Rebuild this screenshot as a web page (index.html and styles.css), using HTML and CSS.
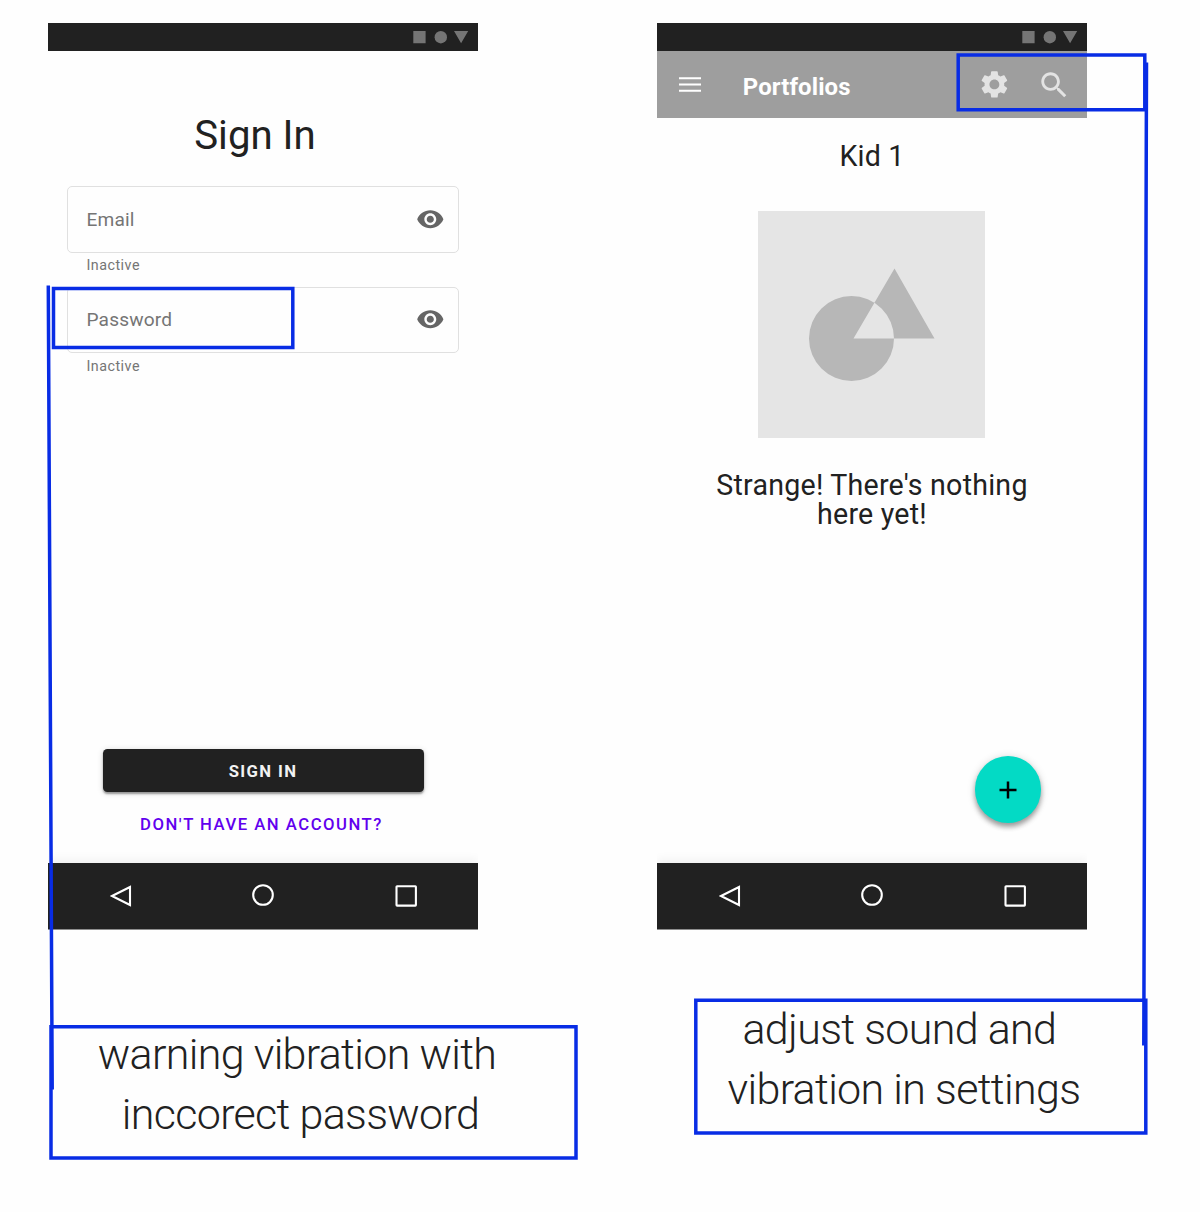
FILE: index.html
```html
<!DOCTYPE html>
<html lang="en">
<head>
<meta charset="utf-8">
<title>Sign in and portfolios wireframes</title>
<link rel="stylesheet" href="styles.css">
</head>
<body>
<svg class="defs" aria-hidden="true">
  <symbol id="status" viewBox="0 0 430 28.5">
    <path d="M365.300 8h12.300v12.300H365.300zM406 8h14.200l-7.100 12.200z"/>
    <circle cx="392.8" cy="14.200" r="6.200"/>
  </symbol>
  <symbol id="nav" viewBox="0 0 430 67">
    <path d="M64 33l18-9v18z"/>
    <circle cx="215" cy="32" r="9.8"/>
    <rect x="348.5" y="23.2" width="19.4" height="19.4" rx=".6"/>
  </symbol>
  <symbol id="eye" viewBox="0 0 24 24">
    <path d="M12 4.500C7 4.500 2.730 7.610 1 12c1.730 4.390 6 7.500 11 7.500s9.270-3.110 11-7.500c-1.730-4.390-6-7.500-11-7.500zM12 17c-2.760 0-5-2.240-5-5s2.240-5 5-5 5 2.240 5 5-2.240 5-5 5zm0-8c-1.660 0-3 1.340-3 3s1.340 3 3 3 3-1.340 3-3-1.340-3-3-3z"/>
  </symbol>
</svg>

<main class="board">
  <section class="column">
    <div class="phone">
      <svg class="status"><use href="#status"/></svg>
      <div class="screen sign-in">
        <h1 class="title">Sign In</h1>
        <div class="field"><span>Email</span><svg class="eye"><use href="#eye"/></svg></div>
        <p class="helper">Inactive</p>
        <div class="field"><span>Password</span><svg class="eye"><use href="#eye"/></svg></div>
        <p class="helper">Inactive</p>
        <div class="actions">
          <button class="primary">SIGN IN</button>
          <a class="link">DON'T HAVE AN ACCOUNT?</a>
        </div>
      </div>
      <svg class="nav"><use href="#nav"/></svg>
    </div>
    <div class="note note-left">
      <p class="note-one">warning vibration with</p>
      <p class="note-two">inccorect password</p>
    </div>
  </section>

  <section class="column">
    <div class="phone">
      <svg class="status"><use href="#status"/></svg>
      <header class="appbar">
        <svg class="menu" viewBox="0 0 22 15"><path d="M0 1.200h22M0 7.500h22M0 13.800h22"/></svg>
        <h2 class="appbar-title">Portfolios</h2>
        <svg class="gear" viewBox="0 0 24 24"><path d="M19.140 12.940c.040-.300.060-.610.060-.940 0-.320-.020-.640-.070-.940l2.030-1.580c.180-.140.230-.410.120-.610l-1.920-3.320c-.120-.220-.370-.290-.590-.220l-2.390.960c-.500-.380-1.030-.700-1.620-.940l-.360-2.540c-.040-.240-.240-.410-.480-.410h-3.840c-.240 0-.430.170-.470.410l-.360 2.540c-.590.240-1.130.570-1.620.940l-2.390-.960c-.220-.080-.470 0-.590.220L2.740 8.870c-.120.210-.080.470.120.610l2.030 1.580c-.050.300-.090.630-.090.940s.020.640.070.940l-2.030 1.580c-.180.140-.230.410-.120.610l1.920 3.320c.120.220.370.290.590.220l2.390-.960c.500.380 1.030.700 1.620.940l.360 2.540c.050.240.240.410.480.410h3.840c.240 0 .440-.170.470-.410l.360-2.540c.590-.240 1.130-.560 1.620-.940l2.390.960c.220.080.470 0 .590-.220l1.920-3.320c.120-.220.070-.470-.120-.610l-2.010-1.580zM12 15.600c-1.980 0-3.600-1.620-3.600-3.600s1.620-3.600 3.600-3.600 3.600 1.620 3.600 3.600-1.620 3.600-3.600 3.600z"/></svg>
        <svg class="search" viewBox="0 0 24 24"><path d="M15.500 14h-.790l-.280-.270C15.410 12.590 16 11.110 16 9.500 16 5.910 13.090 3 9.500 3S3 5.910 3 9.500 5.910 16 9.500 16c1.610 0 3.090-.590 4.230-1.570l.270.280v.790l5 4.990L20.490 19l-4.990-5zm-6 0C7.010 14 5 11.990 5 9.500S7.010 5 9.500 5 14 7.010 14 9.500 11.990 14 9.500 14z"/></svg>
      </header>
      <div class="screen portfolio">
        <h3 class="kid">Kid 1</h3>
        <svg class="placeholder" viewBox="0 0 227 227">
          <path fill-rule="evenodd" d="M51 127.500a42.500 42.500 0 1 0 85 0a42.500 42.500 0 1 0-85 0zM95.500 127.500h81L136.500 57.500z"/>
        </svg>
        <p class="empty">Strange! There's nothing<br>here yet!</p>
        <button class="fab" aria-label="Add"><svg viewBox="0 0 18 18"><path d="M9 .5v17M.5 9h17"/></svg></button>
      </div>
      <svg class="nav"><use href="#nav"/></svg>
    </div>
    <div class="note note-right">
      <p class="note-three">adjust sound and</p>
      <p class="note-four">vibration in settings</p>
    </div>
  </section>

  <svg class="markup" viewBox="0 0 1200 1212">
    <path d="M53.500 288.500H292.800V347.500H53.500zM48.300 285.500L52.200 1089.500M958.200 54.900H1144.800V109.800H958.200zM1146.500 62.500L1143.800 1045.500"/>
    <path d="M51 1026.700H576V1157.900H51zM695.800 1000.300H1145.800V1133H695.800z"/>
  </svg>
</main>
</body>
</html>
```
FILE: styles.css
```css
* { box-sizing: border-box; }

body {
  margin: 0;
  background: #fefefe;
  color: #212121;
  font-family: Roboto, sans-serif;
}

h1, h2, h3, p { margin: 0; font-weight: 400; white-space: nowrap; }
button { border: 0; padding: 0; font-family: inherit; }
svg { display: block; flex: none; }
.defs { position: absolute; width: 0; height: 0; }

.board {
  position: relative;
  display: flex;
  gap: 80px;
  width: 1200px;
  height: 1212px;
  padding: 22.5px 0 0 48px;
  overflow: hidden;
}

.column { width: 529px; }
.phone { display: flex; flex-direction: column; width: 430px; height: 907px; }
.status { width: 430px; height: 28.5px; background: #212121; fill: #757575; }
.nav {
  width: 430px;
  height: 67px;
  background: #212121;
  fill: none;
  stroke: #fff;
  stroke-width: 2.1;
  box-shadow: 0 -3px 10px rgba(0, 0, 0, .06);
  clip-path: inset(-16px 0 0 0);
}
.screen { flex: 1; display: flex; flex-direction: column; }

.sign-in { padding: 61px 19px 28px; }
.title {
  height: 74px;
  padding-right: 16px;
  font-size: 40.2px;
  line-height: 48px;
  text-align: center;
}
.field {
  display: flex;
  align-items: center;
  justify-content: space-between;
  height: 66.5px;
  padding: 0 13px 0 18.500px;
  border: 1.200px solid #e0e0e0;
  border-radius: 5px;
  color: #757575;
  font-size: 19.1px;
  letter-spacing: .18px;
}
.eye { width: 28.6px; height: 28.6px; fill: #666; }
.helper {
  height: 34px;
  padding: 4.500px 0 0 19.500px;
  color: #757575;
  font-size: 14.3px;
  line-height: 17px;
  letter-spacing: .48px;
}
.actions { display: flex; flex-direction: column; align-items: center; margin-top: auto; }
.primary {
  width: 321px;
  height: 43px;
  border-radius: 4.500px;
  background: #212121;
  color: #f2f2f2;
  font-size: 16.7px;
  font-weight: 700;
  letter-spacing: 1.35px;
  line-height: 46px;
  box-shadow: 0 2px 2px rgba(0, 0, 0, .35), 0 1px 6px rgba(0, 0, 0, .16);
}
.link {
  margin-top: 22.600px;
  padding-right: 3px;
  color: #6200ee;
  font-size: 16.7px;
  font-weight: 500;
  letter-spacing: 1.5px;
  line-height: 20px;
}

.appbar {
  display: flex;
  align-items: center;
  height: 67px;
  padding-left: 22.300px;
  background: #9e9e9e;
  color: #fff;
}
.menu { width: 22px; height: 15px; stroke: #fff; stroke-width: 2.1; }
.appbar-title {
  width: 235px;
  margin-left: 41.500px;
  padding-top: 4px;
  font-size: 23.9px;
  font-weight: 700;
  letter-spacing: .12px;
}
.gear { width: 32.8px; height: 32.8px; fill: #e3e3e3; }
.search { width: 34.3px; height: 34.3px; margin-left: 26.300px; margin-top: 1px; fill: #e3e3e3; }

.portfolio { align-items: center; padding-top: 21px; }
.kid { height: 71.5px; font-size: 28.6px; line-height: 34px; letter-spacing: .2px; }
.placeholder { width: 227px; height: 227px; margin-right: 1px; background: #e5e5e5; fill: #b7b7b7; }
.empty {
  margin-top: 33.500px;
  font-size: 28.6px;
  line-height: 28.6px;
  letter-spacing: .22px;
  text-align: center;
}
.fab {
  display: grid;
  place-items: center;
  width: 66.600px;
  height: 66.600px;
  margin: auto 45.600px 39.500px auto;
  border-radius: 50%;
  background: #03dac5;
  box-shadow: 0 4px 5px rgba(0, 0, 0, .32), 0 1px 9px rgba(0, 0, 0, .16);
}
.fab svg { width: 18px; height: 18px; stroke: #000; stroke-width: 2.5; }

.note {
  font-family: "Roboto Light", Roboto, sans-serif;
  font-size: 43px;
  line-height: 60px;
  letter-spacing: -.68px;
}
.note p { font-weight: 300; }
.note-left { width: 528.5px; height: 134.5px; margin: 94.800px 0 0 1.300px; padding-left: 48.500px; }
.note-right { width: 453.5px; height: 136px; margin: 69.200px 0 0 37px; padding-left: 33.500px; }
.note-two { padding-left: 24px; }
.note-three { padding-left: 15px; }

.markup {
  position: absolute;
  left: 0;
  top: 0;
  width: 1200px;
  height: 1212px;
  fill: none;
  stroke: #082ce5;
  stroke-width: 3.5;
}
```
